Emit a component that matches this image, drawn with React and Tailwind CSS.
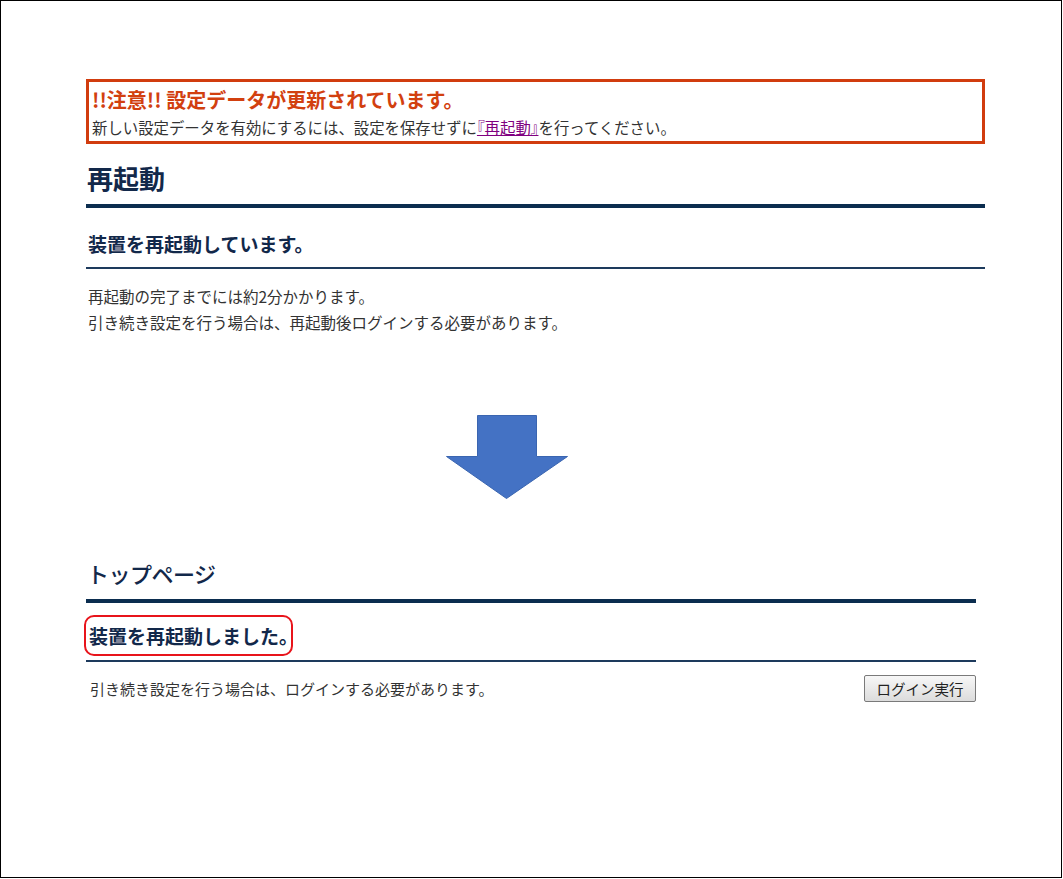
export default function App() {
  return (
    <div className="w-[1062px] h-[878px] bg-white border border-black font-['Noto_Sans_CJK_JP','Noto_Sans',sans-serif] text-[#333]">
      <div className="pl-[85px] pt-[78px]">
        {/* Warning box */}
        <div className="w-[899px] h-[65px] border-[3px] border-[#d13c0e] px-[3px] pt-[6px]">
          <div className="text-[20px] leading-[24px] font-bold text-[#d2400f]">
            !!注意!! 設定データが更新されています。
          </div>
          <div className="mt-[4px] text-[15.4px] leading-[22px] text-[#333]">
            新しい設定データを有効にするには、設定を保存せずに
            <span className="text-[#800080] underline [font-feature-settings:'palt']">『再起動』</span>
            を行ってください。
          </div>
        </div>

        {/* 再起動 section */}
        <div className="w-[899px]">
          <h1 className="mt-[19px] text-[26px] leading-[30px] font-bold text-[#12284a] pl-[1px]">再起動</h1>
          <div className="mt-[11px] h-[4px] bg-[#0b2d4f]"></div>
          <h2 className="mt-[24px] text-[19px] leading-[24px] font-bold text-[#12284a] pl-[2px]">
            装置を再起動しています。
          </h2>
          <div className="mt-[11px] h-[2px] bg-[#1d3a5c]"></div>
          <div className="mt-[14px] text-[15.5px] leading-[26px] pl-[2px]">
            <p>再起動の完了までには約2分かかります。</p>
            <p>引き続き設定を行う場合は、再起動後ログインする必要があります。</p>
          </div>
        </div>

        {/* Arrow */}
        <div className="mt-[80px] ml-[360px]">
          <svg width="123" height="85" viewBox="0 0 123 85">
            <polygon
              points="31.5,0.5 90.5,0.5 90.5,41.5 121.5,41.5 60.5,83.5 0.5,41.5 31.5,41.5"
              fill="#4472c4"
              stroke="#3a65b0"
              strokeWidth="1"
            />
          </svg>
        </div>

        {/* トップページ section */}
        <div className="w-[890px]">
          <h1 className="mt-[58px] text-[22px] leading-[30px] text-[#12284a] pl-[1px] tracking-[-0.5px] font-medium">
            トップページ
          </h1>
          <div className="mt-[11px] h-[4px] bg-[#0b2d4f]"></div>
          <div className="mt-[12px] -ml-[2px] w-[209px] h-[41px] border-2 border-[#e8141b] rounded-[10px] flex items-center pl-[3px]">
            <span className="text-[19px] leading-[24px] font-bold text-[#12284a] whitespace-nowrap">装置を再起動しました。</span>
          </div>
          <div className="mt-[4px] h-[2px] bg-[#1d3a5c]"></div>
          <div className="mt-[13px] flex items-center justify-between">
            <span className="pl-[4px] text-[15px] leading-[22px]">
              引き続き設定を行う場合は、ログインする必要があります。
            </span>
            <button className="w-[112px] h-[27px] border border-[#7a7a7a] rounded-[2px] bg-gradient-to-b from-[#f7f7f7] to-[#dcdcdc] text-[14.5px] leading-[20px] text-[#222]">
              ログイン実行
            </button>
          </div>
        </div>
      </div>
    </div>
  );
}
